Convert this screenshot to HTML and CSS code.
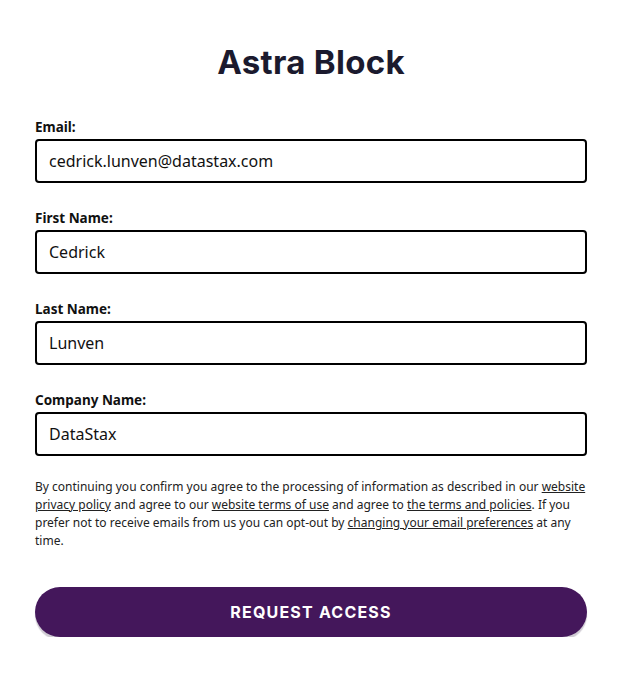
FILE: index.html
```html
<!DOCTYPE html>
<html>
<head>
<meta charset="utf-8">
<link rel="stylesheet" href="styles.css">
</head>
<body>
<main class="page">
  <h1 class="title">Astra Block</h1>
  <form class="form">
    <div class="field">
      <label class="label">Email:</label>
      <div class="input">cedrick.lunven@datastax.com</div>
    </div>
    <div class="field">
      <label class="label">First Name:</label>
      <div class="input">Cedrick</div>
    </div>
    <div class="field">
      <label class="label">Last Name:</label>
      <div class="input">Lunven</div>
    </div>
    <div class="field">
      <label class="label">Company Name:</label>
      <div class="input">DataStax</div>
    </div>
    <p class="legal">By continuing you confirm you agree to the processing of information as described in our <a>website privacy policy</a> and agree to our <a>website terms of use</a> and agree to <a>the terms and policies</a>. If you prefer not to receive emails from us you can opt-out by <a>changing your email preferences</a> at any time.</p>
    <button class="btn" type="button">REQUEST ACCESS</button>
  </form>
</main>
</body>
</html>
```
FILE: styles.css
```css
html, body { margin: 0; padding: 0; background: #fff; }
body { font-family: "Noto Sans", sans-serif; color: #111; }
.page { width: 552px; margin-left: 35px; padding-top: 40px; }
.title {
  margin: 0 0 34px;
  text-align: center;
  font-family: "Inter", "Lato", sans-serif;
  font-weight: 700;
  font-size: 33px;
  line-height: 44px;
  color: #1b1a2e;
  letter-spacing: 0.3px;
}
.form { display: flex; flex-direction: column; }
.field { display: flex; flex-direction: column; margin-bottom: 26px; }
.label { font-size: 13.5px; font-weight: 700; line-height: 18px; margin-bottom: 3px; color: #111; }
.input {
  box-sizing: border-box;
  height: 44px;
  border: 2px solid #000;
  border-radius: 4px;
  padding: 0 12px;
  display: flex;
  align-items: center;
  font-size: 16px;
  color: #111;
}
.legal {
  margin: -4px 0 0;
  font-size: 12px;
  line-height: 18px;
  color: #222;
}
.legal a { text-decoration: underline; color: #222; }
.btn {
  margin-top: 37px;
  height: 50px;
  border: none;
  border-radius: 25px;
  background: #44175b;
  color: #fff;
  font-family: "Inter", "Lato", sans-serif;
  font-weight: 700;
  font-size: 16px;
  letter-spacing: 1.2px;
  box-shadow: 0 3px 1px #cfcbd3;
}
```
